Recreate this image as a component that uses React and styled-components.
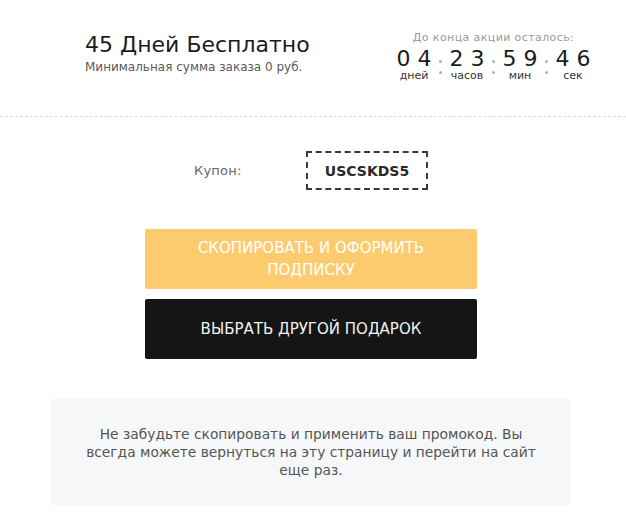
import React from 'react'
import styled, { createGlobalStyle } from 'styled-components'

const GlobalStyle = createGlobalStyle`
  body {
    margin: 0;
    background: #ffffff;
    font-family: 'DejaVu Sans', 'Open Sans', sans-serif;
  }
`

const Page = styled.div`
  width: 626px;
  height: 531px;
  overflow: hidden;
`

const Header = styled.header`
  display: flex;
  justify-content: space-between;
  align-items: flex-start;
  padding: 26px 31px 0 85px;
  border-bottom: 1px dashed #dcdcdc;
  box-sizing: border-box;
  height: 117px;
`

const Offer = styled.div`
  padding-top: 6px;
`

const Title = styled.h1`
  margin: 0;
  font-size: 22px;
  font-weight: 400;
  color: #1c1c1c;
  line-height: 26px;
`

const Subtitle = styled.p`
  margin: 2px 0 0;
  font-size: 12px;
  color: #5a5a5a;
  line-height: 14px;
`

const Timer = styled.div`
  display: flex;
  flex-direction: column;
  align-items: center;
  padding-top: 5px;
`

const TimerLabel = styled.div`
  font-size: 11px;
  letter-spacing: 0.4px;
  color: #9a9a9a;
  line-height: 14px;
`

const Units = styled.div`
  display: flex;
  align-items: flex-start;
`

const Unit = styled.div`
  display: flex;
  flex-direction: column;
  align-items: center;
  width: 44px;
`

const Digits = styled.span`
  font-size: 22px;
  font-weight: 400;
  color: #1c1c1c;
  letter-spacing: 7px;
  margin-right: -7px;
  margin-top: 4px;
  line-height: 20px;
`

const UnitName = styled.span`
  font-size: 11px;
  color: #333;
  line-height: 11px;
  margin-top: 1px;
`

const Colon = styled.div`
  width: 9px;
  display: flex;
  flex-direction: column;
  align-items: center;
  gap: 8px;
  padding-top: 14.5px;

  &::before,
  &::after {
    content: '';
    width: 3px;
    height: 3px;
    border-radius: 50%;
    background: #b0b0b0;
  }
`

const Body = styled.main`
  display: flex;
  flex-direction: column;
  align-items: center;
  padding-right: 4px;
`

const CouponRow = styled.div`
  display: flex;
  align-items: center;
  margin-top: 34px;
`

const CouponLabel = styled.span`
  font-size: 13px;
  letter-spacing: 0.2px;
  color: #666;
  width: 112px;
`

const CouponCode = styled.div`
  width: 122px;
  height: 39px;
  box-sizing: border-box;
  border: 2px dashed #343c48;
  display: flex;
  align-items: center;
  justify-content: center;
  font-size: 14px;
  font-weight: 600;
  color: #2a2a2a;
`

const Button = styled.button`
  width: 332px;
  height: 60px;
  border: none;
  border-radius: 2px;
  background: ${(p) => (p.$dark ? '#151515' : '#fccb6e')};
  color: ${(p) => (p.$dark ? '#f0f0f0' : '#ffffff')};
  font-family: inherit;
  font-size: 15px;
  line-height: 22px;
  text-transform: uppercase;
  padding: 0 30px;
  margin-top: ${(p) => p.$gap}px;
  cursor: pointer;
`

const Note = styled.div`
  width: 520px;
  height: 106px;
  margin-top: 40px;
  background: #f6f7f9;
  box-sizing: border-box;
  padding: 26px 30px 0;
  text-align: center;
  font-size: 13.8px;
  line-height: 18px;
  color: #555;
`

const units = [
  { value: '04', name: 'дней' },
  { value: '23', name: 'часов' },
  { value: '59', name: 'мин' },
  { value: '46', name: 'сек' },
]

export default function App() {
  return (
    <Page>
      <GlobalStyle />
      <Header>
        <Offer>
          <Title>45 Дней Бесплатно</Title>
          <Subtitle>Минимальная сумма заказа 0 руб.</Subtitle>
        </Offer>
        <Timer>
          <TimerLabel>До конца акции осталось:</TimerLabel>
          <Units>
            {units.map((u, i) => (
              <React.Fragment key={u.name}>
                {i > 0 && <Colon />}
                <Unit>
                  <Digits>{u.value}</Digits>
                  <UnitName>{u.name}</UnitName>
                </Unit>
              </React.Fragment>
            ))}
          </Units>
        </Timer>
      </Header>
      <Body>
        <CouponRow>
          <CouponLabel>Купон:</CouponLabel>
          <CouponCode>USCSKDS5</CouponCode>
        </CouponRow>
        <Button $gap={39}>Скопировать и оформить подписку</Button>
        <Button $dark $gap={10}>Выбрать другой подарок</Button>
        <Note>
          Не забудьте скопировать и применить ваш промокод. Вы всегда можете
          вернуться на эту страницу и перейти на сайт еще раз.
        </Note>
      </Body>
    </Page>
  )
}
